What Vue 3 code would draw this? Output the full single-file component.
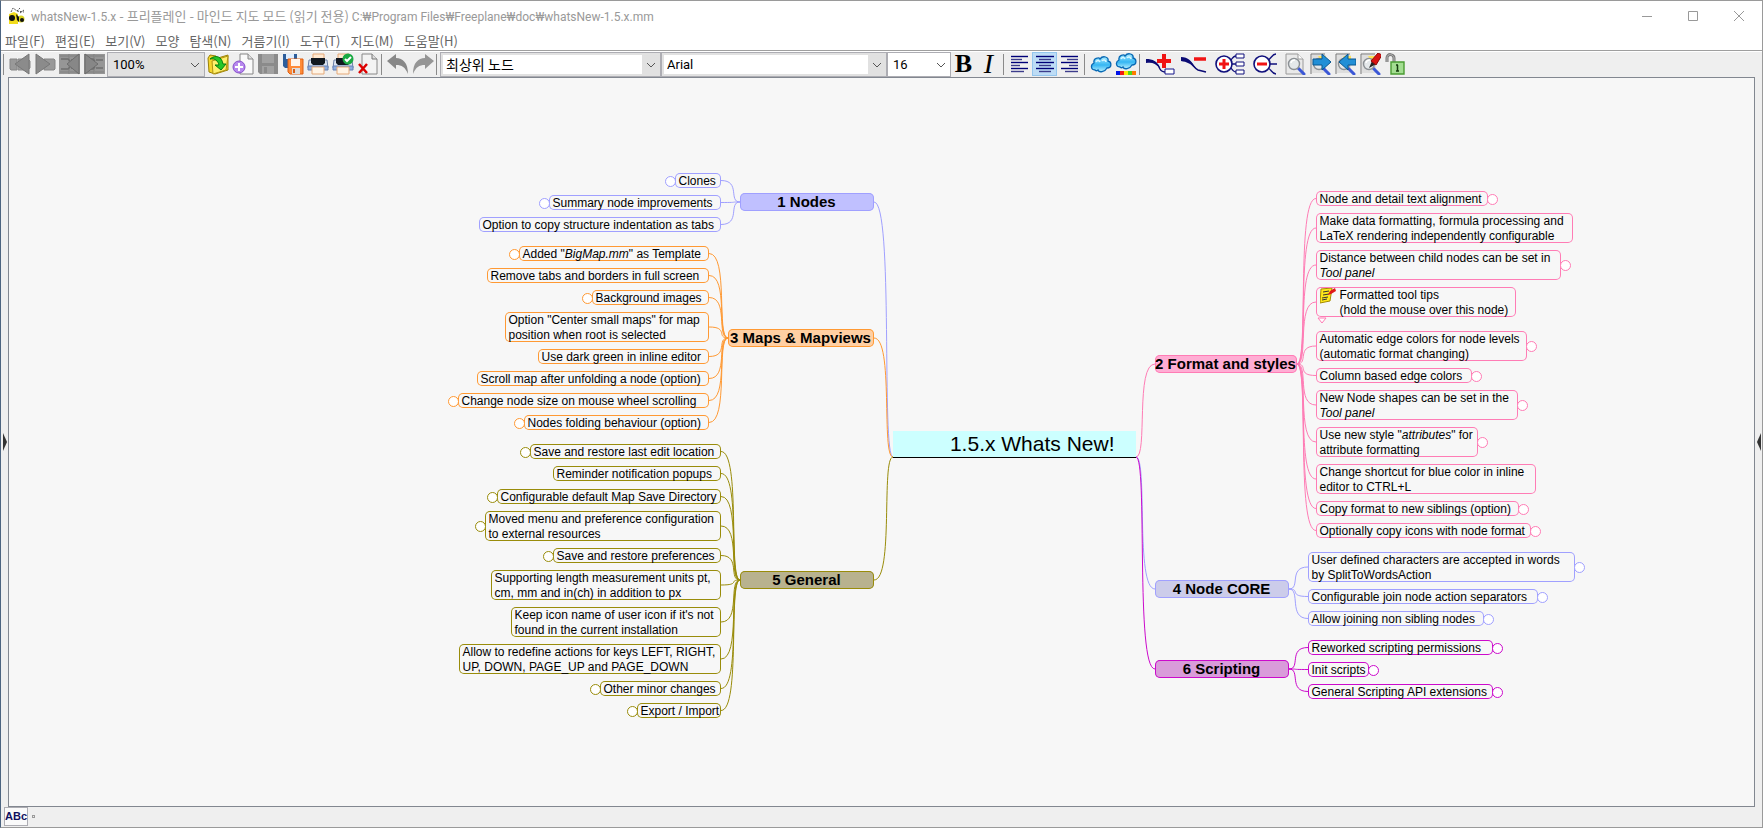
<script setup>
import { ref } from 'vue'

const zoom = ref('100%')
const nodeStyle = ref('최상위 노드')
const fontName = ref('Arial')
const fontSize = ref('16')

const menus = ['파일(F)', '편집(E)', '보기(V)', '모양', '탐색(N)', '거름기(I)', '도구(T)', '지도(M)', '도움말(H)']

const sheet = '<path d="M1 1h12l5 5v15H1z" fill="#e9e9e9" stroke="#9a9a9a"/><path d="M13 1v5h5" fill="#fff" stroke="#9a9a9a"/>'
const lens = '<path d="M13 15l6 6" stroke="#3b57d6" stroke-width="3" stroke-linecap="round"/><circle cx="9" cy="11" r="5.5" fill="#e4e8ea" stroke="#8b9094" stroke-width="1.4"/><path d="M6 10a3.500 3.500 0 0 1 4-3" stroke="#fff" fill="none" stroke-width="1.500"/>'
const finder = '<path d="M1 21V1h14" fill="none" stroke="#777"/><rect x="2" y="2" width="14" height="18" fill="#dedede"/><path d="M8 3h8v5h-5z" fill="#ffe45a"/>' + lens
const cloudShape = (y) => `<g transform="translate(0 ${y})"><path d="M5 16C1 16 0 11 4 9C3 4 9 3 10 5C13 1 19 3 18 7C22 8 22 14 17 14C15 18 9 19 8 16C7 17 6 17 5 16Z" fill="url(#gCloud)" stroke="#0869b5" stroke-width="1.300"/><path d="M6 8c1-2 3-2 4 0M12 7c1-2 4-1 4 1" fill="none" stroke="#d9f6ff" stroke-width="1.500"/></g>`
const printer = '<path d="M6 1h11v8H6z" fill="#ffe9d2" stroke="#e5a978"/><path d="M2 7h18l1 8H1z" fill="#dce4f1" stroke="#6b7fa6"/><path d="M4 5h14v5l-2 2H6l-2-2z" fill="#111820"/><path d="M1 13h20v4H1z" fill="#8eaee0" stroke="#6580b5"/><path d="M5 14h12v7H5z" fill="#fff4e6" stroke="#e5a978"/>'
const disk = (c, d) => `<path d="M1 1h20v20H3l-2-2z" fill="${c}"/><path d="M5 1h12v9H5z" fill="${d}"/><path d="M5 13h12v8H5z" fill="${d}"/><path d="M7 14h3v6H7z" fill="${c}"/>`
const tile = '<path d="M0 1h21v20H0z" fill="#969696"/><path d="M1 3h9M1 19h9M11 3h9M11 19h9M10 1v20" stroke="#808080"/><path d="M2 6h7l2 2M2 16h7l2-2M12 7h7M12 15h7" fill="none" stroke="#6f6f6f" stroke-width="1.500"/>'
const lines = (w) => w.map(([a, b], i) => `<path d="M${a} ${3.5 + i * 3}H${b}" stroke="${i % 2 ? '#3c3c8c' : '#000078'}" stroke-width="1.400"/>`).join('')

const art = {
  back: '<path d="M9 6h10l2 2v7l-2 2H9z" fill="#9c9c9c" stroke="#8a8a8a"/><path d="M1 6h7v11H2l-1-1z" fill="#999" stroke="#858585"/><path d="M20 1v20L6 11z" fill="#8b8b8b" stroke="#777"/>',
  forward: '<path d="M10 6h10l1 1v9l-1 1H10z" fill="#999" stroke="#858585"/><path d="M2 1v20L16 11z" fill="#8b8b8b" stroke="#777"/>',
  prev: tile + '<path d="M20 1v20L8 11z" fill="#878787" stroke="#6d6d6d"/>',
  next: tile + '<path d="M1 1v20L14 11z" fill="#878787" stroke="#6d6d6d"/>',
  open: '<path d="M1 5l2-3 6 1 2 2 10-3v15L8 21l-6-2z" fill="#f5d52c" stroke="#9a8208"/><path d="M5 8l16-5-2 14L6 21z" fill="#fff06c" stroke="#b09313"/><path d="M3 6c6-5 12-2 13 5h3l-5 6-6-5h4C11 8 8 5 3 6z" fill="#25c728" stroke="#087d0e"/>',
  create: '<path d="M8 1h8l5 5v15H8z" fill="#fafafa" stroke="#868686"/><path d="M16 1v5h5" fill="#ddd" stroke="#868686"/><circle cx="7" cy="14" r="6" fill="#b788ee" stroke="#8750cc"/><path d="M7 10v8M3 14h8" stroke="#fff" stroke-width="2"/>',
  save: disk('#8b8b8b', '#a2a2a2'),
  saveAs: '<path d="M1 1h14v14H3l-2-2z" fill="#2c5d9b"/><path d="M4 1h8v5H4z" fill="#dfeeff"/><path d="M6 6h15v15H8l-2-2z" fill="#ff8b38" stroke="#dd5f12"/><path d="M9 6h9v7H9z" fill="#fff5eb"/><path d="M10 15h8v6h-8z" fill="#ddd"/><path d="M11 16h2v4h-2z" fill="#d75e17"/>',
  print: printer,
  printOk: printer + '<circle cx="16" cy="6" r="5.500" fill="#1aaa43"/><path d="M13 6l2 2 4-4" fill="none" stroke="#fff" stroke-width="2"/>',
  remove: '<path d="M5 1h10l5 5v15H5z" fill="#f3f3f3" stroke="#888"/><path d="M15 1v5h5" fill="#ddd" stroke="#777"/><path d="M2 11l8 9M10 11l-8 9" stroke="#dc0000" stroke-width="2.500"/>',
  undo: '<path d="M0 8l9-7v4c7 0 12 5 12 16c-3-7-6-9-12-9v4z" fill="#888"/>',
  redo: '<path d="M22 8l-9-7v4C6 5 1 10 1 21c3-7 6-9 12-9v4z" fill="#959595"/>',
  left: lines([[2, 19], [2, 13], [2, 19], [2, 11], [2, 19], [2, 15]]),
  center: lines([[2, 20], [5, 17], [2, 20], [5, 17], [2, 20], [5, 17]]),
  right: lines([[2, 19], [8, 19], [2, 19], [10, 19], [2, 19], [6, 19]]),
  cloud: cloudShape(1),
  cloudColor: cloudShape(-2) + '<path d="M1 18h4v4H1z" fill="#0012e8"/><path d="M5 18h4v4H5z" fill="#f01717"/><path d="M9 18h4v4H9z" fill="#ffe800"/><path d="M13 18h4v4h-4z" fill="#4ed51a"/><path d="M17 18h4v4h-4z" fill="#ff7a00"/>',
  addEdge: '<path d="M1 8c8-1 12 3 14 8 1 2 3 3 6 3" fill="none" stroke="#0b0b74" stroke-width="1.500"/><path d="M1 6c7 0 11 2 14 9C10 10 7 9 1 10z" fill="#0b0b74"/><path d="M19 1v14M12 8h14" stroke="#f01414" stroke-width="4"/><path d="M20 16h9v5h-9z" fill="#fff" stroke="#15158a"/>',
  removeEdge: '<path d="M1 6c10 0 12 9 17 11l8 2" fill="none" stroke="#0b0b74" stroke-width="1.500"/><path d="M1 4c7 0 11 4 15 12C10 10 7 9 1 8z" fill="#0b0b74"/><path d="M14 6h12" stroke="#f01414" stroke-width="3.500"/>',
  unfold: '<circle cx="9" cy="11" r="8" fill="#fff" stroke="#10107c" stroke-width="1.600"/><path d="M9 6v10M4 11h10" stroke="#f01414" stroke-width="3"/><path d="M16 7c2-3 3-4 5-4M17 11h4M16 15c2 3 3 4 5 4" fill="none" stroke="#10107c" stroke-width="1.300"/><path d="M21 1h8v4h-8zM21 9h8v4h-8zM21 17h8v4h-8z" fill="#fff" stroke="#10107c"/>',
  fold: '<circle cx="9" cy="11" r="8" fill="#fff" stroke="#10107c" stroke-width="1.600"/><path d="M4 11h10" stroke="#f01414" stroke-width="3"/><path d="M15 7c3-1 4-6 8-6M17 11h7M15 15c3 1 4 6 8 6" fill="none" stroke="#10107c" stroke-width="1.300"/>',
  find: sheet + lens,
  findNext: finder + '<path d="M3 6h9V1l9 8-9 8v-5H3z" fill="#218fd6" stroke="#08568f"/>',
  findPrev: finder + '<path d="M21 6h-8V1L4 9l9 8v-5h8z" fill="#218fd6" stroke="#08568f"/>',
  highlight: finder + '<path d="M9 15l3-7 4 3z" fill="#222"/><path d="M11 8l7-8 4 2-6 10z" fill="#d91212" stroke="#8d0909"/>',
  unlock: '<path d="M2 9V5c0-5 7-4 7 0v5" fill="none" stroke="#777" stroke-width="3"/><path d="M2 9V5c0-5 7-4 7 0v5" fill="none" stroke="#b9b9b9"/><path d="M6 9h13v12H6z" fill="#a3dd91" stroke="#4a9c32" stroke-width="1.400"/><path d="M12.500 12v6M11 12h2M11 18h3" stroke="#163d0e" stroke-width="1.500"/>'
}

const tool = (id, label, w = 25) => ({ id, label, w })
const history = [tool('back', 'Back'), tool('forward', 'Forward'), tool('prev', 'Previous map'), tool('next', 'Next map')]
const files = [tool('open', 'Open'), tool('create', 'New map'), tool('save', 'Save'), tool('saveAs', 'Save as'), tool('print', 'Print'), tool('printOk', 'Print directly'), tool('remove', 'Close map')]
const edits = [tool('undo', 'Undo'), tool('redo', 'Redo')]
const aligns = [tool('left', 'Align left'), tool('center', 'Align center'), tool('right', 'Align right')]
const clouds = [tool('cloud', 'Cloud'), tool('cloudColor', 'Cloud color')]
const nodesTools = [
  tool('addEdge', 'New child node', 35), tool('removeEdge', 'Remove node', 35), tool('unfold', 'Unfold', 38), tool('fold', 'Fold', 32),
  tool('find', 'Find'), tool('findNext', 'Find next'), tool('findPrev', 'Find previous'), tool('highlight', 'Highlight'), tool('unlock', 'Unlock')
]

// Children: [x, y, width, folded, ...lines]; text between asterisks is italic.
const branches = [
  { title: '1 Nodes', side: 'l', x: 740, y: 193, w: 134, line: '#a0a0ff', fill: '#c0c0ff', kids: [
    [675, 173, 46, 1, 'Clones'],
    [549, 195, 172, 1, 'Summary node improvements'],
    [479, 217, 242, 0, 'Option to copy structure indentation as tabs']] },
  { title: '3 Maps & Mapviews', side: 'l', x: 728, y: 329, w: 146, line: '#ff9933', fill: '#ffcfa3', kids: [
    [519, 246, 190, 1, 'Added "*BigMap.mm*" as Template'],
    [487, 268, 222, 0, 'Remove tabs and borders in full screen'],
    [592, 290, 117, 1, 'Background images'],
    [505, 312, 204, 0, 'Option "Center small maps" for map', 'position when root is selected'],
    [538, 349, 171, 0, 'Use dark green in inline editor'],
    [477, 371, 232, 0, 'Scroll map after unfolding a node (option)'],
    [458, 393, 251, 1, 'Change node size on mouse wheel scrolling'],
    [524, 415, 185, 1, 'Nodes folding behaviour (option)']] },
  { title: '5 General', side: 'l', x: 740, y: 571, w: 134, line: '#998c0a', fill: '#b8b28f', kids: [
    [530, 444, 191, 1, 'Save and restore last edit location'],
    [553, 466, 168, 0, 'Reminder notification popups'],
    [497, 489, 224, 1, 'Configurable default Map Save Directory'],
    [485, 511, 236, 1, 'Moved menu and preference configuration', 'to external resources'],
    [553, 548, 168, 1, 'Save and restore preferences'],
    [491, 570, 230, 0, 'Supporting length measurement units pt,', 'cm, mm and in(ch) in addition to px'],
    [511, 607, 210, 0, "Keep icon name of user icon if it's not", 'found in the current installation'],
    [459, 644, 262, 0, 'Allow to redefine actions for keys LEFT, RIGHT,', 'UP, DOWN, PAGE_UP and PAGE_DOWN'],
    [600, 681, 121, 1, 'Other minor changes'],
    [637, 703, 84, 1, 'Export / Import']] },
  { title: '2 Format and styles', side: 'r', x: 1155, y: 355, w: 142, line: '#ff7cb5', fill: '#ffadd4', kids: [
    [1316, 191, 172, 1, 'Node and detail text alignment'],
    [1316, 213, 257, 0, 'Make data formatting, formula processing and', 'LaTeX rendering independently configurable'],
    [1316, 250, 245, 1, 'Distance between child nodes can be set in', '*Tool panel*'],
    [1316, 287, 200, 'note', 'Formatted tool tips', '(hold the mouse over this node)'],
    [1316, 331, 211, 1, 'Automatic edge colors for node levels', '(automatic format changing)'],
    [1316, 368, 156, 1, 'Column based edge colors'],
    [1316, 390, 202, 1, 'New Node shapes can be set in the', '*Tool panel*'],
    [1316, 427, 162, 1, 'Use new style "*attributes*" for', 'attribute formatting'],
    [1316, 464, 220, 0, 'Change shortcut for blue color in inline', 'editor to CTRL+L'],
    [1316, 501, 203, 1, 'Copy format to new siblings (option)'],
    [1316, 523, 215, 1, 'Optionally copy icons with node format']] },
  { title: '4 Node CORE', side: 'r', x: 1155, y: 580, w: 134, line: '#a0a0ff', fill: '#ccccea', kids: [
    [1308, 552, 267, 1, 'User defined characters are accepted in words', 'by SplitToWordsAction'],
    [1308, 589, 230, 1, 'Configurable join node action separators'],
    [1308, 611, 176, 1, 'Allow joining non sibling nodes']] },
  { title: '6 Scripting', side: 'r', x: 1155, y: 660, w: 134, line: '#cc0acc', fill: '#d99cda', kids: [
    [1308, 640, 185, 1, 'Reworked scripting permissions'],
    [1308, 662, 61, 1, 'Init scripts'],
    [1308, 684, 185, 1, 'General Scripting API extensions']] }
]

const root = { x: 893, y: 431, w: 243 }
const curve = (x1, y1, x2, y2, s) => `M${x1} ${y1}C${x1 + s * 12} ${y1} ${x2 - s * 20} ${y2} ${x2} ${y2}`

const edges = []
const leaves = []
for (const b of branches) {
  const s = b.side === 'l' ? -1 : 1
  const mid = b.y + 9
  edges.push({ c: b.line, d: curve(s < 0 ? root.x : root.x + root.w, 457, s < 0 ? b.x + b.w : b.x, mid, s) })
  for (const [x, y, w, mark, ...text] of b.kids) {
    const h = text.length * 15
    edges.push({ c: b.line, d: curve(s < 0 ? b.x : b.x + b.w, mid, s < 0 ? x + w : x, y + h / 2, s) })
    leaves.push({
      x, y, w, h, line: b.line, side: b.side, folded: mark === 1, note: mark === 'note',
      rows: text.map((t) => t.split('*'))
    })
  }
}
const px = (n) => n + 'px'
</script>

<template>
  <div class="window">
    <svg class="defs" width="0" height="0" aria-hidden="true">
      <defs>
        <linearGradient id="gCloud" x1="0" y1="0" x2="0" y2="1">
          <stop offset="0" stop-color="#a9ecff" /><stop offset=".55" stop-color="#35b6f3" /><stop offset="1" stop-color="#b8f0ff" />
        </linearGradient>
      </defs>
    </svg>

    <header class="titlebar">
      <svg class="bee" width="18" height="18" viewBox="0 0 18 18" aria-hidden="true">
        <path d="M1 7l5-2 4 2v10H1z" fill="#f2dc1c" /><circle cx="13" cy="12" r="3.500" fill="#d8d320" />
        <circle cx="4" cy="11" r="3" fill="#111" /><path d="M8 7l3 3v5l-2-2z" fill="#111" /><circle cx="14" cy="13" r="2" fill="#111" />
        <path d="M3 5l2-4 4 3 3-3M9 4l7 1M12 6l4-3" fill="none" stroke="#555" stroke-dasharray="2 1" />
      </svg>
      <h1 class="title">whatsNew-1.5.x <span class="ko">- 프리플레인 - 마인드 지도 모드 (읽기 전용)</span> C:₩Program Files₩Freeplane₩doc₩whatsNew-1.5.x.mm</h1>
      <button class="sys" aria-label="Minimize"><svg width="12" height="12"><path d="M1 6.5h10" /></svg></button>
      <button class="sys" aria-label="Maximize"><svg width="12" height="12"><path d="M1.500 1.500h9v9h-9z" /></svg></button>
      <button class="sys" aria-label="Close"><svg width="12" height="12"><path d="M1 1l10 10M11 1L1 11" /></svg></button>
    </header>

    <nav class="menubar">
      <button v-for="m in menus" :key="m">{{ m }}</button>
    </nav>

    <div class="toolbar">
      <i class="sep"></i>
      <button v-for="t in history" :key="t.id" class="tool" :aria-label="t.label"><svg width="22" height="22" viewBox="0 0 22 22" v-html="art[t.id]"></svg></button>
      <label class="combo gray zoom">
        <select v-model="zoom" aria-label="Zoom"><option>100%</option></select>
        <svg class="chev" width="10" height="6"><path d="M1 1l4 4 4-4" /></svg>
      </label>
      <button v-for="t in files" :key="t.id" class="tool" :aria-label="t.label"><svg width="22" height="22" viewBox="0 0 22 22" v-html="art[t.id]"></svg></button>
      <i class="sep"></i>
      <button v-for="t in edits" :key="t.id" class="tool" :aria-label="t.label"><svg width="22" height="22" viewBox="0 0 22 22" v-html="art[t.id]"></svg></button>
      <i class="sep"></i>
      <label class="combo edit style">
        <select v-model="nodeStyle" aria-label="Style"><option>최상위 노드</option></select>
        <svg class="chev" width="10" height="6"><path d="M1 1l4 4 4-4" /></svg>
      </label>
      <label class="combo edit font">
        <select v-model="fontName" aria-label="Font"><option>Arial</option></select>
        <svg class="chev" width="10" height="6"><path d="M1 1l4 4 4-4" /></svg>
      </label>
      <label class="combo size">
        <select v-model="fontSize" aria-label="Font size"><option>16</option></select>
        <svg class="chev" width="10" height="6"><path d="M1 1l4 4 4-4" /></svg>
      </label>
      <button class="tool letter bold" aria-label="Bold">B</button>
      <button class="tool letter ital" aria-label="Italic">I</button>
      <i class="sep wide"></i>
      <button v-for="t in aligns" :key="t.id" class="tool" :class="{ on: t.id === 'center' }" :aria-label="t.label"><svg width="22" height="22" viewBox="0 0 22 22" v-html="art[t.id]"></svg></button>
      <i class="sep wide"></i>
      <button v-for="t in clouds" :key="t.id" class="tool" :aria-label="t.label"><svg width="22" height="22" viewBox="0 0 22 22" v-html="art[t.id]"></svg></button>
      <i class="sep"></i>
      <button v-for="t in nodesTools" :key="t.id" class="tool" :style="{ width: px(t.w) }" :aria-label="t.label"><svg :width="t.w - 4" height="22" v-html="art[t.id]"></svg></button>
    </div>

    <div class="work">
      <button class="grip" aria-label="Toggle left panel"><svg width="6" height="20"><path d="M1 1l4 9-4 9z" /></svg></button>
      <main class="canvas">
        <div class="map">
          <svg class="edges" width="1" height="1" aria-hidden="true">
            <path v-for="(e, i) in edges" :key="i" :d="e.d" :stroke="e.c" />
          </svg>
          <div class="root" :style="{ left: px(root.x), top: px(root.y), width: px(root.w) }">1.5.x Whats New!</div>
          <div v-for="b in branches" :key="b.title" class="branch" :style="{ left: px(b.x), top: px(b.y), width: px(b.w), background: b.fill, color: b.line }"><b>{{ b.title }}</b></div>
          <div v-for="(n, i) in leaves" :key="i" class="leaf" :style="{ left: px(n.x), top: px(n.y), width: px(n.w), height: px(n.h), color: n.line }">
            <svg v-if="n.note" class="note" width="17" height="17" aria-hidden="true">
              <path d="M1 1l11-1-2 13-10 2z" fill="#ffe81a" stroke="#a48a00" />
              <path d="M3 4l6-1M3 7l6-1M2 10l6-1M2 12l5-1" stroke="#333" />
              <path d="M8 7l2-4 5-3 1 3-5 3z" fill="#e01818" />
            </svg>
            <span class="text">
              <span v-for="(row, r) in n.rows" :key="r" class="row"><template v-for="(part, p) in row" :key="p"><em v-if="p % 2">{{ part }}</em><template v-else>{{ part }}</template></template></span>
            </span>
            <i v-if="n.folded" class="fold" :class="n.side"></i>
            <svg v-if="n.note" class="more" width="10" height="7" aria-hidden="true"><path d="M1 1h8l-4 5z" fill="#fff" :stroke="n.line" /></svg>
          </div>
        </div>
      </main>
      <button class="grip" aria-label="Toggle right panel"><svg width="6" height="20"><path d="M5 1L1 10l4 9z" /></svg></button>
    </div>

    <footer class="status">
      <button class="abc" aria-label="Spell check">ABc</button><i class="dot"></i>
    </footer>
  </div>
</template>

<style>
body { margin: 0; }
</style>

<style scoped>
.window {
  box-sizing: border-box;
  min-height: 100vh;
  display: flex;
  flex-direction: column;
  border: 1px solid #9a9a9a;
  border-left-color: #4c6480;
  background: #efefef;
  font-family: "Noto Sans CJK KR", "Noto Sans", sans-serif;
  font-size: 14px;
  color: #000;
}
button { border: 0; padding: 0; margin: 0; background: none; font: inherit; color: inherit; }
.defs { position: absolute; }
.titlebar { display: flex; align-items: center; height: 29px; background: #fff; padding-left: 7px; }
.title { flex: 1; margin: 0 0 0 5px; font-family: Roboto, "Noto Sans CJK KR", sans-serif; font-size: 12px; font-weight: 400; color: #999; white-space: nowrap; overflow: hidden; }
.ko { font-family: "Noto Sans CJK KR", sans-serif; font-size: 13px; }
.sys { width: 46px; height: 28px; display: grid; place-items: center; }
.sys svg { fill: none; stroke: #999; }
.menubar { display: flex; gap: 10px; height: 18px; padding: 2px 0 0 4px; background: #fff; border-bottom: 1px solid #9f9f9f; font-size: 13px; line-height: 18px; color: #666; }
.toolbar { display: flex; align-items: flex-start; height: 25px; padding-left: 1px; border-top: 1px solid #fff; }
.sep { flex: none; width: 1px; height: 21px; margin: 2px 3px 0 1px; background: #8a8a8a; }
.sep.wide { margin-left: 2px; }
.tool { flex: none; width: 25px; height: 24px; display: grid; place-items: center; }
.tool.on { background: #bddcf5; box-shadow: inset 0 0 0 1px #94c6ee; }
.letter { font: 26px/24px "Liberation Serif", serif; }
.bold { font-weight: 700; }
.ital { font-style: italic; font-size: 28px; }
.combo { position: relative; flex: none; box-sizing: border-box; height: 25px; border: 1px solid #adadb3; background: #fff; font-family: Roboto, "Noto Sans CJK KR", sans-serif; font-size: 13px; }
.combo select { appearance: none; box-sizing: border-box; width: 100%; height: 100%; margin: 0; border: 0; border-radius: 0; padding: 0 0 0 5px; background: none; font: inherit; color: #000; display: block; }
.combo.gray { background: #e1e1e1; }
.combo.edit { background: #e1e1e1; padding: 2px 18px 2px 2px; }
.combo.edit select { background: #fff; padding-left: 3px; }
.chev { position: absolute; right: 4px; top: 9px; fill: none; stroke: #555; pointer-events: none; }
.zoom { width: 98px; }
.combo.style { width: 221px; font-size: 14px; }
.font { width: 226px; }
.size { width: 64px; }
.work { flex: 1; display: flex; align-items: stretch; }
.grip { flex: none; width: 7px; display: grid; place-items: center; }
.grip svg { fill: #333; }
.canvas { position: relative; flex: 1; min-height: 640px; overflow: hidden; background: #f7f7f7; border: 1px solid #828790; font-family: "Liberation Sans", Arial, sans-serif; }
.map { position: absolute; left: calc(50% - 882px); top: calc(50% - 442px); }
.edges { position: absolute; left: 0; top: 0; overflow: visible; fill: none; }
.root { position: absolute; box-sizing: border-box; height: 27px; padding-right: 21px; text-align: right; font-size: 21px; line-height: 26px; background: #ccffff; border-bottom: 1px solid #000; white-space: nowrap; }
.branch { position: absolute; height: 18px; border-radius: 5px; box-shadow: inset 0 0 0 1px currentColor; text-align: center; font-size: 15px; line-height: 18px; white-space: nowrap; }
.branch b { color: #000; }
.leaf { position: absolute; display: flex; box-sizing: border-box; padding: 1px 3px 0 4px; border-radius: 5px; box-shadow: inset 0 0 0 1px currentColor; background: #f7f7f7; font-size: 12px; line-height: 15px; white-space: nowrap; }
.text { color: #000; }
.row { display: block; }
.note { margin-right: 3px; }
.fold { position: absolute; top: 50%; margin-top: -5px; box-sizing: border-box; width: 11px; height: 11px; border: 1px solid currentColor; border-radius: 50%; background: #fff; }
.fold.l { right: 100%; margin-right: -1px; }
.fold.r { left: 100%; margin-left: -1px; }
.more { position: absolute; left: 1px; top: 30px; }
.status { display: flex; align-items: flex-start; height: 20px; padding-left: 3px; gap: 4px; }
.abc { width: 24px; height: 19px; border: 1px solid #adadb3; background: #fafafa; font: 700 11px/15px "Liberation Sans", sans-serif; color: #101060; }
.dot { width: 1px; height: 1px; margin-top: 8px; border: 1px solid #9a9a9a; }
</style>
